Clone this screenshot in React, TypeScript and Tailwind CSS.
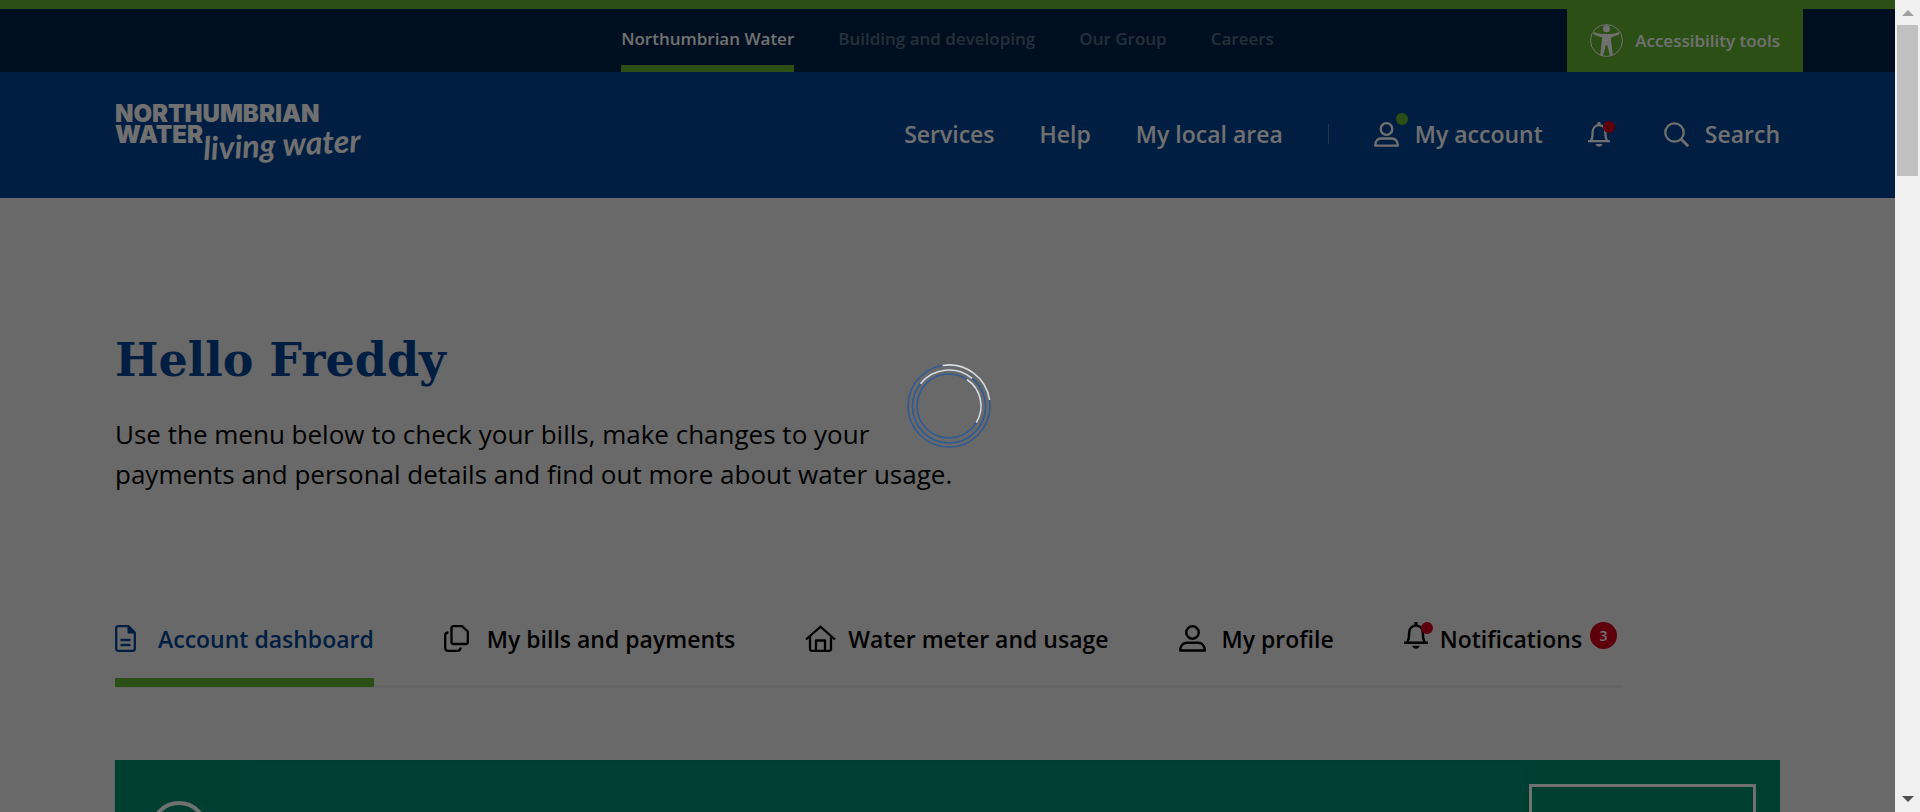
import type { ReactNode } from "react";

const topLinks = ["Building and developing", "Our Group", "Careers"];

function Svg({ w, h, box, children }: { w: number; h: number; box?: string; children: ReactNode }) {
  return (
    <svg
      width={w}
      height={h}
      viewBox={box ?? `0 0 ${w} ${h}`}
      fill="none"
      stroke="currentColor"
      strokeWidth="2.3"
      strokeLinejoin="round"
      aria-hidden="true"
      className="shrink-0"
    >
      {children}
    </svg>
  );
}

function PersonIcon({ w, h }: { w: number; h: number }) {
  return (
    <Svg w={w} h={h} box="0 0 25 25">
      <circle cx="12.5" cy="7" r="5.8" />
      <path d="M1.2 23.7c0-4.6 2.6-7.2 6-7.2h10.6c3.4 0 6 2.6 6 7.2z" />
    </Svg>
  );
}

function BellIcon({ w, h }: { w: number; h: number }) {
  return (
    <Svg w={w} h={h} box="0 0 22 25">
      <path d="M0 19.2h22M2.8 18.800c1.600-1.800 1.800-4.800 1.800-8.300C4.600 6 7.400 3.200 11 3.200s6.400 2.800 6.400 7.300c0 3.500.2 6.500 1.800 8.300" />
      <path d="M11 0v3" strokeWidth="3" />
      <path d="M7.500 22h7c-.6 1.800-1.900 2.800-3.500 2.800s-2.900-1-3.500-2.800z" fill="currentColor" stroke="none" />
    </Svg>
  );
}

function SearchIcon() {
  return (
    <Svg w={25} h={25}>
      <circle cx="10.5" cy="10.5" r="9.2" />
      <path d="M17.200 17.200l7 7" strokeWidth="2.8" />
    </Svg>
  );
}

function DocumentIcon() {
  return (
    <Svg w={21} h={27}>
      <path d="M3 1.200h10.500L19.800 7.500V24a2 2 0 0 1-2 1.800H3.200a2 2 0 0 1-2-2V3a2 2 0 0 1 2-1.800z" />
      <path d="M13 1v7h7z" fill="currentColor" strokeWidth="1" />
      <path d="M5.500 15h10M5.500 20h10" />
    </Svg>
  );
}

function CopyIcon() {
  return (
    <Svg w={25} h={27}>
      <path d="M9.500 1.200H18l5.800 5.300V17a2 2 0 0 1-2 2H9.500a2 2 0 0 1-2-2V3a2 2 0 0 1 2-1.800z" />
      <path d="M4.500 7.500C2.200 7.500 1.200 8.500 1.200 10.500V23a3 3 0 0 0 3 2.800h9.300c2 0 3-1 3-3.300" />
    </Svg>
  );
}

function HomeIcon() {
  return (
    <Svg w={31} h={27}>
      <path d="M1 14.500L15.500 1.700 30 14.500" strokeLinejoin="miter" />
      <path d="M5 11.500V23.800a2 2 0 0 0 2 2h17a2 2 0 0 0 2-2V11.500M11 26V15.500h9V26" />
    </Svg>
  );
}

function AccessibilityIcon() {
  return (
    <Svg w={33} h={33}>
      <circle cx="16.5" cy="16.5" r="16" strokeWidth="1" />
      <circle cx="16.5" cy="4.8" r="3.5" fill="currentColor" stroke="none" />
      <path
        d="M4.500 8.200c4 1.400 8 1.900 12 1.900s8-.5 12-1.900c1.100-.1 1.300 2 .1 2.600l-7.100 2.500c-.7.400-.6 1.200-.5 2.700l1.800 15-2.800.8-2.700-10.500h-1.600l-2.700 10.500-2.800-.8 1.800-15c.1-1.500.2-2.300-.5-2.700l-7.100-2.500c-1.200-.6-1-2.700.1-2.600z"
        fill="currentColor"
        stroke="none"
      />
    </Svg>
  );
}

function Logo() {
  return (
    <a href="#home" className="flex flex-col pt-px font-['Inter'] text-[24px] leading-[21px] font-black text-white">
      <span>NORTHUMBRIAN</span>
      <span className="flex">
        WATER
        <span className="relative">
          <span className="absolute top-1 left-0 -rotate-3 whitespace-nowrap font-['Lato'] text-[32px] leading-8 font-bold italic">
            living water
          </span>
        </span>
      </span>
    </a>
  );
}

function Spinner() {
  return (
    <svg width="86" height="86" viewBox="0 0 86 86" fill="none" strokeWidth="1.6" role="img" aria-label="Loading">
      <g stroke="#2f5a94">
        <circle cx="43" cy="43" r="41" />
        <circle cx="43" cy="43.5" r="36.5" />
        <circle cx="43" cy="43" r="32" />
      </g>
      <g stroke="#dcdcdc">
        <path d="M36.500 2.500A41 41 0 0 1 83.600 37" />
        <path d="M14.500 20.700A36.500 36.500 0 0 1 66 15.300" />
        <path d="M61 16.500A32 32 0 0 1 70.300 59.700" />
      </g>
    </svg>
  );
}

function Tab({ icon, label, active, children }: { icon: ReactNode; label: string; active?: boolean; children?: ReactNode }) {
  return (
    <li>
      <a
        href="#tab"
        aria-current={active ? "page" : undefined}
        className={
          active
            ? "-mb-[2px] flex h-[65px] items-start gap-3 border-b-[9px] border-[#64b434] text-[#004494]"
            : "flex h-[62px] items-start gap-3 text-black"
        }
      >
        {icon}
        <span className="leading-[34px]">{label}</span>
        {children}
      </a>
    </li>
  );
}

function TabIcon({ children }: { children: ReactNode }) {
  return <span className="w-[31px] pt-[3px]">{children}</span>;
}

export default function App() {
  return (
    <div className="flex h-screen overflow-hidden font-['Open_Sans',sans-serif]">
      <div className="relative min-w-0 flex-1 overflow-hidden bg-[#efefef]">
        <div className="h-[9px] bg-[#64b434]" />
        <div className="grid h-[63px] grid-cols-[1fr_auto_1fr] bg-[#002249]">
          <nav aria-label="Sites" className="col-start-2 flex gap-11 text-[17px] leading-[52px] font-semibold whitespace-nowrap">
            <a href="#nw" className="border-b-[7px] border-[#64b434] pt-1 text-white">
              Northumbrian Water
            </a>
            {topLinks.map((l) => (
              <a key={l} href="#site" className="pt-1 text-white/35">
                {l}
              </a>
            ))}
          </nav>
          <button className="mr-[92px] flex items-center gap-3 justify-self-end bg-[#64b434] px-[23px] text-[17px] font-semibold whitespace-nowrap text-white">
            <AccessibilityIcon />
            Accessibility tools
          </button>
        </div>

        <header className="flex h-[126px] items-start justify-between bg-[#004494] px-[115px] pt-[30px]">
          <Logo />
          <nav
            aria-label="Main"
            className="flex items-center gap-[45px] pt-[13px] text-[23px] leading-[38px] font-semibold whitespace-nowrap text-white"
          >
            <a href="#services">Services</a>
            <a href="#help">Help</a>
            <a href="#area">My local area</a>
            <span className="h-5 w-px bg-white/30" />
            <a href="#account" className="flex items-center gap-4">
              <span className="relative">
                <PersonIcon w={25} h={25} />
                <span className="absolute -top-[9px] -right-[9px] size-3 rounded-full bg-[#64b434]" />
              </span>
              My account
            </a>
            <button aria-label="Notifications" className="relative w-[31px]">
              <BellIcon w={22} h={25} />
              <span className="absolute -top-px left-[15px] size-3 rounded-full bg-[#d6001c]" />
            </button>
            <button className="flex items-center gap-4">
              <SearchIcon />
              Search
            </button>
          </nav>
        </header>

        <main className="px-[115px] pt-[126px]">
          <h1 className="font-['DejaVu_Serif',serif] text-[46px] leading-[72px] font-bold text-[#004494]">Hello Freddy</h1>
          <p className="mt-[18px] max-w-[860px] text-[26px] leading-10 text-black">
            Use the menu below to check your bills, make changes to your
            <br />
            payments and personal details and find out more about water usage.
          </p>

          <ul className="mt-[128px] flex w-fit gap-[70px] border-b-[3px] border-[#e4e4e4] pr-[6px] text-[23px] font-semibold whitespace-nowrap">
            <Tab active label="Account dashboard" icon={<TabIcon><DocumentIcon /></TabIcon>} />
            <Tab label="My bills and payments" icon={<TabIcon><CopyIcon /></TabIcon>} />
            <Tab label="Water meter and usage" icon={<TabIcon><HomeIcon /></TabIcon>} />
            <Tab label="My profile" icon={<TabIcon><PersonIcon w={27} h={27} /></TabIcon>} />
            <Tab
              label="Notifications"
              icon={
                <span className="relative">
                  <BellIcon w={24} h={27} />
                  <span className="absolute top-0 left-[17px] size-3 rounded-full bg-[#d6001c]" />
                </span>
              }
            >
              <span className="-ml-1 flex size-[27px] items-center justify-center rounded-full bg-[#d6001c] text-sm text-white">
                3
              </span>
            </Tab>
          </ul>

          <section className="mt-[72px] flex h-[300px] items-start justify-between bg-[#008f6f] p-6 text-white">
            <div className="mt-[17px] ml-[11px] size-[58px] rounded-full border-4 border-white" />
            <div className="h-[76px] w-[227px] border-[3px] border-white" />
          </section>
        </main>

        <div className="absolute inset-0 flex items-center justify-center bg-black/56 pl-[2px]">
          <Spinner />
        </div>
      </div>

      <div aria-hidden="true" className="flex w-[25px] flex-col items-center bg-[#f0f0f0] pt-[10px] pb-[10px]">
        <svg width="12" height="6" viewBox="0 0 12 6" className="shrink-0 fill-[#a0a0a0]">
          <path d="M0 6L6 0l6 6z" />
        </svg>
        <div className="mt-[9px] h-[151px] w-[21px] bg-[#c0c0c0]" />
        <svg width="12" height="6" viewBox="0 0 12 6" className="mt-auto shrink-0 fill-[#505050]">
          <path d="M0 0l6 6 6-6z" />
        </svg>
      </div>
    </div>
  );
}
